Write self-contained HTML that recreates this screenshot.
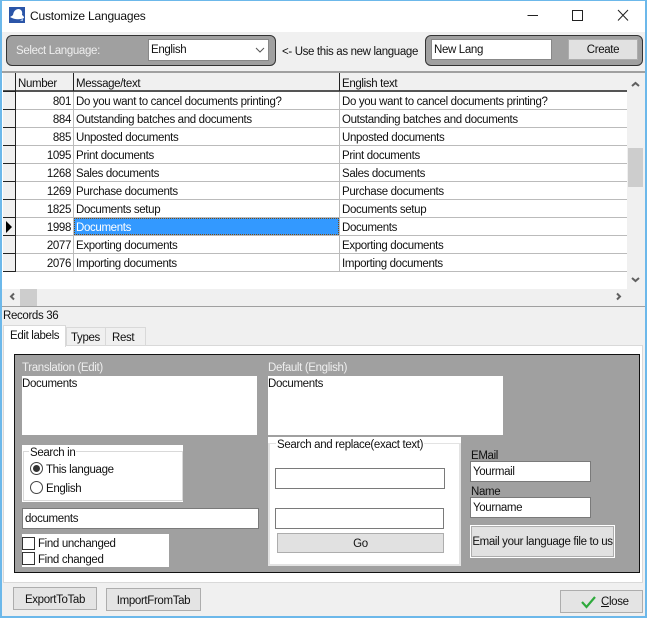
<!DOCTYPE html>
<html><head><meta charset="utf-8"><style>
html,body{margin:0;padding:0;background:#f0f0f0}
#w{position:relative;width:647px;height:618px;overflow:hidden;background:#f0f0f0;font:11.5px/16px "Liberation Sans",sans-serif;letter-spacing:-.35px;color:#111}
#w div,#w span.t{position:absolute;box-sizing:border-box;white-space:nowrap}
.t{position:absolute;white-space:nowrap;margin-top:1px}
.i{background:#fff;border:1px solid #7a7a7a}
.b{background:#e1e1e1;border:1px solid #adadad;text-align:center}
.lw{color:#eee}
</style></head><body><div id="w">
<div style="left:0;top:0;width:647px;height:32px;background:#fff"></div>
<svg style="position:absolute;left:9px;top:7px" width="16" height="16" viewBox="0 0 16 16"><rect width="16" height="16" fill="#2b55a8"/><path d="M1 10 Q3 9 4 8 Q5 2 10 2 Q14 3 13 8 Q15 9 15 11 Q8 14 1 10Z" fill="#fff"/><path d="M11 14l3-3v3z" fill="#9db8e0"/></svg>
<span class="t" style="left:30px;top:7px;font-size:12px;letter-spacing:-.2px">Customize Languages</span>
<svg style="position:absolute;left:527px;top:8px" width="112" height="14" fill="none" stroke="#222"><path d="M0.500 7.500H11"/><rect x="45.500" y="2.500" width="10" height="10"/><path d="M91 2l10 10.500M101 2l-10 10.500"/></svg>

<div style="left:6px;top:35px;width:270px;height:31px;background:#a0a0a0;border:1px solid #333;border-radius:6px"></div>
<span class="t lw" style="left:16px;top:42px">Select Language:</span>
<div class="i" style="left:148px;top:39px;width:121px;height:22px;border-color:#888"></div>
<span class="t" style="left:151px;top:41px">English</span>
<svg style="position:absolute;left:255px;top:47px" width="10" height="6" fill="none" stroke="#555"><path d="M1 1l4 4 4-4"/></svg>
<span class="t" style="left:282px;top:43px">&lt;- Use this as new language</span>
<div style="left:425px;top:35px;width:218px;height:31px;background:#a0a0a0;border:1px solid #333;border-radius:6px"></div>
<div class="i" style="left:431px;top:39px;width:121px;height:21px;border-color:#888"></div>
<span class="t" style="left:434px;top:41px">New Lang</span>
<div class="b" style="left:568px;top:39px;width:70px;height:21px;line-height:20px">Create</div>

<div style="left:2px;top:71px;width:643px;height:2px;background:#a0a0a0"></div>
<div style="left:2px;top:73px;width:625px;height:216px;background:#fff"></div>
<div style="left:3px;top:73px;width:624px;height:18px;background:#f0f0f0;border-bottom:1px solid #555"></div>
<div style="left:627px;top:73px;width:18px;height:216px;background:#f0f0f0"></div>
<div style="left:628px;top:148px;width:15px;height:39px;background:#cdcdcd"></div>
<div style="left:2px;top:289px;width:643px;height:17px;background:#f0f0f0"></div>
<div style="left:20px;top:289px;width:17px;height:17px;background:#cdcdcd"></div>
<svg style="position:absolute;left:0;top:0" width="647" height="310" fill="none" stroke="#606060" stroke-width="2"><path d="M632 86l3.500-3 3.500 3M632 278l3.500 3 3.500-3M14 293.500l-3 3 3 3M617 293.500l3 3-3 3"/></svg>
<div style="left:15px;top:73px;width:1px;height:18px;background:#222"></div>
<div style="left:73px;top:73px;width:1px;height:18px;background:#222"></div>
<div style="left:339px;top:73px;width:1px;height:18px;background:#222"></div>
<span class="t" style="left:18px;top:75px">Number</span>
<span class="t" style="left:76px;top:75px">Message/text</span>
<span class="t" style="left:342px;top:75px">English text</span>

<div style="left:3px;top:91px;width:13px;height:181px;background:#f0f0f0;border-right:1px solid #222;border-bottom:1px solid #222"></div>
<div style="left:73px;top:91px;width:1px;height:181px;background:#bbb"></div>
<div style="left:339px;top:91px;width:1px;height:181px;background:#bbb"></div>
<div style="left:16px;top:91px;width:611px;height:1px;background:#555"></div>
<div style="left:16px;top:109px;width:611px;height:1px;background:#bbb"></div>
<div style="left:16px;top:127px;width:611px;height:1px;background:#bbb"></div>
<div style="left:16px;top:145px;width:611px;height:1px;background:#bbb"></div>
<div style="left:16px;top:163px;width:611px;height:1px;background:#bbb"></div>
<div style="left:16px;top:181px;width:611px;height:1px;background:#bbb"></div>
<div style="left:16px;top:199px;width:611px;height:1px;background:#bbb"></div>
<div style="left:16px;top:217px;width:611px;height:1px;background:#bbb"></div>
<div style="left:16px;top:235px;width:611px;height:1px;background:#bbb"></div>
<div style="left:16px;top:253px;width:611px;height:1px;background:#bbb"></div>
<div style="left:16px;top:271px;width:611px;height:1px;background:#bbb"></div>
<div style="left:3px;top:91px;width:12px;height:1px;background:#222"></div>
<div style="left:3px;top:109px;width:12px;height:1px;background:#222"></div>
<div style="left:3px;top:127px;width:12px;height:1px;background:#222"></div>
<div style="left:3px;top:145px;width:12px;height:1px;background:#222"></div>
<div style="left:3px;top:163px;width:12px;height:1px;background:#222"></div>
<div style="left:3px;top:181px;width:12px;height:1px;background:#222"></div>
<div style="left:3px;top:199px;width:12px;height:1px;background:#222"></div>
<div style="left:3px;top:217px;width:12px;height:1px;background:#222"></div>
<div style="left:3px;top:235px;width:12px;height:1px;background:#222"></div>
<div style="left:3px;top:253px;width:12px;height:1px;background:#222"></div>
<svg style="position:absolute;left:6px;top:221px" width="7" height="12"><path d="M0 0l6 6-6 6z" fill="#000"/></svg>
<div style="left:74px;top:218px;width:265px;height:17px;background:#3399ff;border:1px dotted #7a4a10"></div>

<span class="t" style="right:576px;top:93px">801</span><span class="t" style="left:76px;top:93px">Do you want to cancel documents printing?</span><span class="t" style="left:342px;top:93px">Do you want to cancel documents printing?</span>
<span class="t" style="right:576px;top:111px">884</span><span class="t" style="left:76px;top:111px">Outstanding batches and documents</span><span class="t" style="left:342px;top:111px">Outstanding batches and documents</span>
<span class="t" style="right:576px;top:129px">885</span><span class="t" style="left:76px;top:129px">Unposted documents</span><span class="t" style="left:342px;top:129px">Unposted documents</span>
<span class="t" style="right:576px;top:147px">1095</span><span class="t" style="left:76px;top:147px">Print documents</span><span class="t" style="left:342px;top:147px">Print documents</span>
<span class="t" style="right:576px;top:165px">1268</span><span class="t" style="left:76px;top:165px">Sales documents</span><span class="t" style="left:342px;top:165px">Sales documents</span>
<span class="t" style="right:576px;top:183px">1269</span><span class="t" style="left:76px;top:183px">Purchase documents</span><span class="t" style="left:342px;top:183px">Purchase documents</span>
<span class="t" style="right:576px;top:201px">1825</span><span class="t" style="left:76px;top:201px">Documents setup</span><span class="t" style="left:342px;top:201px">Documents setup</span>
<span class="t" style="right:576px;top:219px">1998</span><span class="t" style="left:76px;top:219px;color:#fff">Documents</span><span class="t" style="left:342px;top:219px">Documents</span>
<span class="t" style="right:576px;top:237px">2077</span><span class="t" style="left:76px;top:237px">Exporting documents</span><span class="t" style="left:342px;top:237px">Exporting documents</span>
<span class="t" style="right:576px;top:255px">2076</span><span class="t" style="left:76px;top:255px">Importing documents</span><span class="t" style="left:342px;top:255px">Importing documents</span>

<div style="left:0;top:306px;width:647px;height:1px;background:#a0a0a0"></div>
<span class="t" style="left:3px;top:307px">Records 36</span>

<div style="left:3px;top:345px;width:640px;height:238px;background:#fff;border:1px solid #d9d9d9"></div>
<div style="left:3px;top:325px;width:63px;height:22px;background:#fff;border:1px solid #d9d9d9;border-bottom:0"></div>
<div style="left:66px;top:327px;width:40px;height:18px;background:#f0f0f0;border:1px solid #d9d9d9;border-bottom:0"></div>
<div style="left:105px;top:327px;width:41px;height:18px;background:#f0f0f0;border:1px solid #d9d9d9;border-bottom:0"></div>
<span class="t" style="left:10px;top:327px">Edit labels</span>
<span class="t" style="left:71px;top:329px">Types</span>
<span class="t" style="left:112px;top:329px">Rest</span>

<div style="left:14px;top:354px;width:626px;height:219px;background:#a0a0a0;border:1px solid #111"></div>
<span class="t lw" style="left:22px;top:359px">Translation (Edit)</span>
<span class="t lw" style="left:268px;top:359px">Default (English)</span>
<div style="left:22px;top:376px;width:235px;height:59px;background:#fff"></div>
<div style="left:268px;top:376px;width:235px;height:59px;background:#fff"></div>
<span class="t" style="left:22px;top:375px">Documents</span>
<span class="t" style="left:268px;top:375px">Documents</span>

<div style="left:22px;top:445px;width:161px;height:57px;background:#fff"></div>
<div style="left:23px;top:451px;width:160px;height:50px;border:1px solid #d9d9d9"></div>
<span class="t" style="left:29px;top:444px;background:#fff;padding:0 1px;height:14px;line-height:16px">Search in</span>
<svg style="position:absolute;left:29px;top:461px" width="16" height="36" fill="none"><circle cx="7.500" cy="7.500" r="6" stroke="#444"/><circle cx="7.500" cy="7.500" r="3.500" fill="#333"/><circle cx="7.500" cy="26.500" r="6" stroke="#444"/></svg>
<span class="t" style="left:46px;top:461px">This language</span>
<span class="t" style="left:46px;top:480px">English</span>
<div class="i" style="left:22px;top:508px;width:237px;height:21px"></div>
<span class="t" style="left:25px;top:510px">documents</span>
<div style="left:22px;top:534px;width:147px;height:33px;background:#fff"></div>
<div style="left:22px;top:537px;width:13px;height:13px;background:#fff;border:1px solid #333"></div>
<div style="left:22px;top:552px;width:13px;height:13px;background:#fff;border:1px solid #333"></div>
<span class="t" style="left:38px;top:535px">Find unchanged</span>
<span class="t" style="left:38px;top:551px">Find changed</span>

<div style="left:268px;top:437px;width:193px;height:129px;background:#fff"></div>
<div style="left:268px;top:443px;width:193px;height:123px;border:2px solid #e3e3e3;border-top-width:1px"></div>
<span class="t" style="left:276px;top:436px;background:#fff;padding:0 1px;height:14px;line-height:16px">Search and replace(exact text)</span>
<div class="i" style="left:275px;top:468px;width:170px;height:21px"></div>
<div class="i" style="left:275px;top:508px;width:169px;height:21px"></div>
<div class="b" style="left:277px;top:533px;width:167px;height:20px;line-height:21px">Go</div>

<span class="t" style="left:471px;top:447px">EMail</span>
<div class="i" style="left:470px;top:461px;width:121px;height:21px"></div>
<span class="t" style="left:473px;top:463px">Yourmail</span>
<span class="t" style="left:471px;top:483px">Name</span>
<div class="i" style="left:470px;top:497px;width:121px;height:21px"></div>
<span class="t" style="left:473px;top:499px">Yourname</span>
<div style="left:470px;top:525px;width:145px;height:33px;background:#e1e1e1;border:1px solid #fff;box-shadow:inset 0 0 0 1px #adadad;text-align:center;line-height:33px">Email your language file to us</div>

<div class="b" style="left:13px;top:587px;width:84px;height:23px;line-height:25px;background:#e4e4e4">ExportToTab</div>
<div class="b" style="left:106px;top:588px;width:95px;height:23px;line-height:25px;background:#e4e4e4">ImportFromTab</div>
<div class="b" style="left:560px;top:590px;width:83px;height:23px;background:#e4e4e4"></div>
<svg style="position:absolute;left:580px;top:595px" width="17" height="14" fill="none"><path d="M2 7l4.500 5L15 2" stroke="#2eaa3c" stroke-width="2.200"/></svg>
<span class="t" style="left:601px;top:593px"><u>C</u>lose</span>

<div style="left:0;top:0;width:2px;height:618px;background:#6cb8ea"></div>
<div style="left:645px;top:0;width:2px;height:618px;background:#6cb8ea"></div>
<div style="left:0;top:0;width:647px;height:1px;background:#6cb8ea"></div>
<div style="left:0;top:616px;width:647px;height:2px;background:#6cb8ea"></div>
</div></body></html>
